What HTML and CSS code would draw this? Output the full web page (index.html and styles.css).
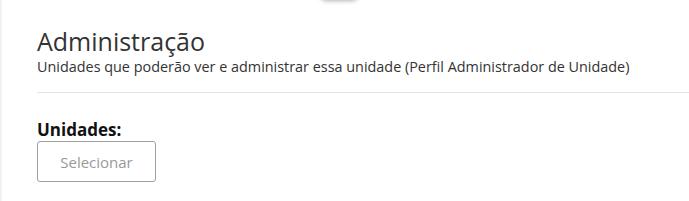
FILE: index.html
```html
<!DOCTYPE html>
<html lang="pt-BR">
<head>
    <meta charset="UTF-8">
    <meta name="viewport" content="width=device-width, initial-scale=1.0">
    <title>Administração</title>
    <link rel="stylesheet" href="styles.css">
</head>
<body>
    <div class="panel">
        <div class="toggle-shadow"></div>

        <div class="section-header">
            <h2 class="section-title">Administração</h2>
            <p class="section-desc">Unidades que poderão ver e administrar essa unidade (Perfil Administrador de Unidade)</p>
        </div>

        <div class="field">
            <label class="field-label">Unidades:</label>
            <button class="select-btn">Selecionar</button>
        </div>
    </div>
</body>
</html>
```

FILE: styles.css
```css
*{
    padding: 0;
    margin: 0;
    box-sizing: border-box;
}

body {
    font-family: "Open Sans", "Noto Sans", sans-serif;
    background-color: #fff;
    color: #333;
}

.panel {
    position: relative;
    height: 201px;
    border-left: 2px solid #f1f1f1;
    padding-left: 35px;
    overflow: hidden;
}

.toggle-shadow {
    position: absolute;
    left: 320px;
    top: -16px;
    width: 40px;
    height: 16px;
    border-radius: 8px;
    background: #fff;
    box-shadow: -3px 1px 4px rgba(0, 0, 0, 0.3);
}

.section-header {
    padding-top: 25px;
    padding-bottom: 16px;
    border-bottom: 1px solid #e4e4e4;
}

.section-title {
    font-size: 25px;
    font-weight: normal;
    line-height: 33px;
    color: #333;
}

.section-desc {
    font-size: 14.4px;
    line-height: 18px;
    color: #333;
}

.field {
    padding-top: 26px;
}

.field-label {
    display: block;
    font-size: 17px;
    font-weight: bold;
    line-height: 22px;
    color: #111;
}

.select-btn {
    width: 119px;
    height: 41px;
    background: #fff;
    border: 1px solid #a0a0a0;
    border-radius: 3px;
    font-family: "Open Sans", "Noto Sans", sans-serif;
    font-size: 15px;
    color: #999;
    cursor: pointer;
}
```
